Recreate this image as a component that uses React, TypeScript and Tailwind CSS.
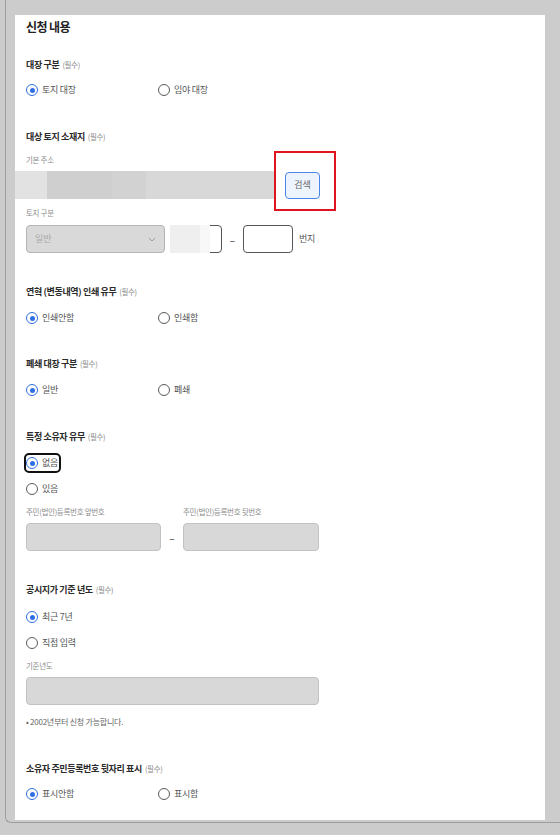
import type { ReactNode } from 'react'

const FONT = '"Noto Sans CJK KR", "Noto Sans", sans-serif'

function Required() {
  return <span className="ml-[3px] text-[7.5px] font-normal text-[#8a8a8a]">(필수)</span>
}

function SectionLabel({ children, className = '' }: { children: ReactNode; className?: string }) {
  return (
    <div className={`h-[16px] flex items-center text-[9px] font-bold text-[#2a2a2a] tracking-[-0.04em] ${className}`}>
      {children}
      <Required />
    </div>
  )
}

function SmallLabel({ children, className = '' }: { children: ReactNode; className?: string }) {
  return (
    <div className={`h-[12px] flex items-center text-[7.5px] text-[#8c8c8c] tracking-[-0.04em] ${className}`}>
      {children}
    </div>
  )
}

function Radio({ checked = false, label, focused = false }: { checked?: boolean; label: string; focused?: boolean }) {
  return (
    <span
      className={`flex items-center gap-[4px] h-[16px] ${focused ? 'outline-2 outline-[#111] rounded-[3px] pr-[1px]' : ''}`}
    >
      {checked ? (
        <span className="w-[12px] h-[12px] rounded-full border-[1.5px] border-[#2f6fe4] flex items-center justify-center bg-white">
          <span className="w-[5px] h-[5px] rounded-full bg-[#2f6fe4]" />
        </span>
      ) : (
        <span className="w-[12px] h-[12px] rounded-full border border-[#5a5a5a] bg-white" />
      )}
      <span className="text-[9px] leading-[16px] text-[#555] tracking-[-0.03em]">{label}</span>
    </span>
  )
}

function RadioPair({ a, b, className = '' }: { a: string; b: string; className?: string }) {
  return (
    <div className={`flex items-center h-[16px] ${className}`}>
      <div className="w-[132px] flex items-center">
        <Radio checked label={a} />
      </div>
      <div className="flex items-center">
        <Radio label={b} />
      </div>
    </div>
  )
}

function GrayInput({ className = '' }: { className?: string }) {
  return <div className={`h-[28px] rounded-[4px] bg-[#d8d8d8] border border-[#c2c2c2] ${className}`} />
}

export default function App() {
  return (
    <div className="min-h-screen bg-[#cccccc] overflow-hidden" style={{ fontFamily: FONT }}>
      <div className="ml-[5px] w-[560px] border-l border-b border-[#9d9d9d] rounded-bl-[6px] pl-[9px] pt-[15px] pb-[2px]">
        <div className="w-[530px] h-[805px] bg-white pl-[11px]">
          {/* title */}
          <div className="h-[24px] flex items-center text-[12px] font-bold text-[#222] tracking-[-0.05em]">신청 내용</div>

          {/* 대장 구분 */}
          <SectionLabel className="mt-[18px]">대장 구분</SectionLabel>
          <RadioPair a="토지 대장" b="임야 대장" className="mt-[9px]" />

          {/* 대상 토지 소재지 */}
          <SectionLabel className="mt-[31px]">대상 토지 소재지</SectionLabel>
          <SmallLabel className="mt-[9px]">기본 주소</SmallLabel>
          <div className="mt-[5px] flex items-center h-[28px]">
            <div className="-ml-[11px] w-[261px] h-[28px] flex overflow-hidden rounded-r-[4px] border-r border-[#c8c8c8]">
              <div className="w-[32px] bg-[#e2e2e2]" />
              <div className="w-[65px] bg-[#cfcfcf]" />
              <div className="w-[34px] bg-[#d2d2d2]" />
              <div className="flex-1 bg-[#d8d8d8]" />
            </div>
            <div className="relative ml-[9px]">
              <div className="h-[27px] w-[35px] rounded-[4px] border border-[#4a86e8] bg-[#eef4fd] flex items-center justify-center text-[9px] text-[#666]">
                검색
              </div>
              <div className="absolute -left-[11px] -top-[21px] w-[62px] h-[60px] border-2 border-[#e0141e]" />
            </div>
          </div>
          <SmallLabel className="mt-[8px]">토지 구분</SmallLabel>
          <div className="mt-[6px] flex items-center h-[28px]">
            <div className="w-[139px] h-[28px] rounded-[4px] bg-[#d9d9d9] border border-[#b4b4b4] flex items-center justify-between px-[8px]">
              <span className="text-[9px] text-[#a8a8a8]">일반</span>
              <svg width="8" height="5" viewBox="0 0 8 5" fill="none">
                <path d="M1 1l3 3 3-3" stroke="#9a9a9a" strokeWidth="1" />
              </svg>
            </div>
            <div className="relative ml-[5px] w-[52px] h-[28px] rounded-[4px] border border-[#555] bg-white">
              <div className="absolute -left-px -top-px -bottom-px w-[40px] flex">
                <div className="w-[30px] bg-[#efefef]" />
                <div className="w-[10px] bg-[#f8f8f8]" />
              </div>
            </div>
            <span className="w-[21px] text-center text-[10px] text-[#333]">–</span>
            <div className="w-[50px] h-[28px] rounded-[4px] border border-[#555] bg-white" />
            <span className="ml-[6px] text-[9px] text-[#555] tracking-[-0.04em]">번지</span>
          </div>

          {/* 연혁 */}
          <SectionLabel className="mt-[31px]">연혁 (변동내역) 인쇄 유무</SectionLabel>
          <RadioPair a="인쇄안함" b="인쇄함" className="mt-[10px]" />

          {/* 폐쇄 대장 구분 */}
          <SectionLabel className="mt-[30px]">폐쇄 대장 구분</SectionLabel>
          <RadioPair a="일반" b="폐쇄" className="mt-[10px]" />

          {/* 특정 소유자 유무 */}
          <SectionLabel className="mt-[31px]">특정 소유자 유무</SectionLabel>
          <div className="mt-[10px] h-[16px] flex items-center">
            <Radio checked focused label="없음" />
          </div>
          <div className="mt-[10px] h-[16px] flex items-center">
            <Radio label="있음" />
          </div>
          <div className="mt-[9px] flex">
            <SmallLabel className="w-[157px]">주민(법인)등록번호 앞번호</SmallLabel>
            <SmallLabel>주민(법인)등록번호 뒷번호</SmallLabel>
          </div>
          <div className="mt-[5px] flex items-center">
            <GrayInput className="w-[135px]" />
            <span className="w-[22px] text-center text-[10px] text-[#333]">–</span>
            <GrayInput className="w-[136px]" />
          </div>

          {/* 공시지가 기준 년도 */}
          <SectionLabel className="mt-[31px]">공시지가 기준 년도</SectionLabel>
          <div className="mt-[11px] h-[16px] flex items-center">
            <Radio checked label="최근 7년" />
          </div>
          <div className="mt-[10px] h-[16px] flex items-center">
            <Radio label="직접 입력" />
          </div>
          <SmallLabel className="mt-[9px]">기준년도</SmallLabel>
          <GrayInput className="mt-[5px] w-[293px]" />
          <div className="mt-[11px] h-[12px] flex items-center text-[8px] text-[#666] tracking-[-0.03em]">
            • 2002년부터 신청 가능합니다.
          </div>

          {/* 소유자 주민등록번호 */}
          <SectionLabel className="mt-[33px]">소유자 주민등록번호 뒷자리 표시</SectionLabel>
          <RadioPair a="표시안함" b="표시함" className="mt-[9px]" />
        </div>
      </div>
    </div>
  )
}
